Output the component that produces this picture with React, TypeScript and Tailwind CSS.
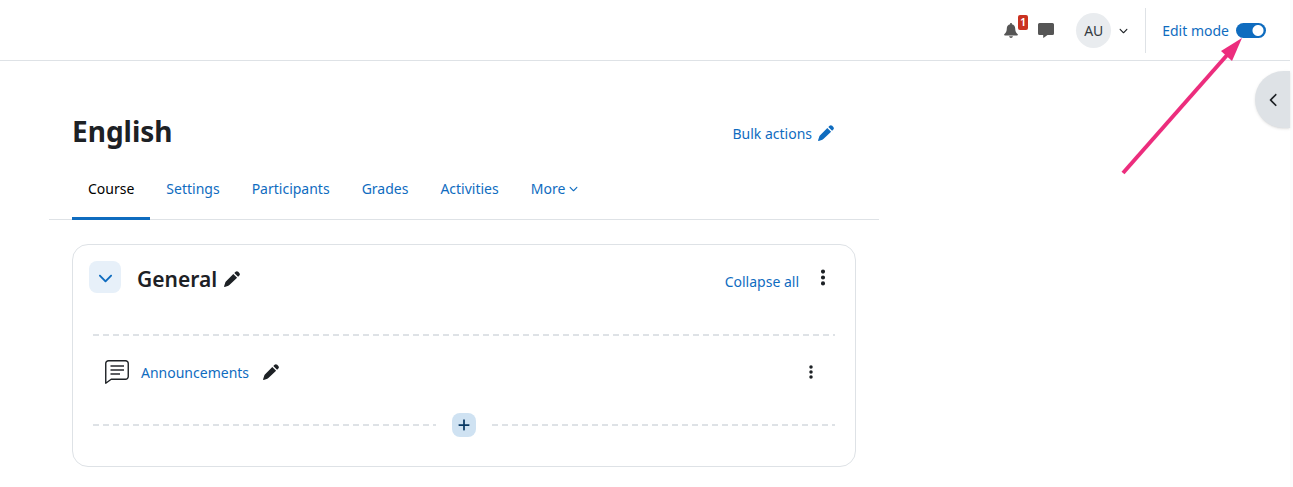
import type { ReactNode } from "react";
import { FaChevronDown, FaChevronLeft, FaEllipsisVertical, FaPlus } from "react-icons/fa6";

const tabs = ["Course", "Settings", "Participants", "Grades", "Activities"];

function Dashes() {
  return (
    <div className="h-[2px] flex-1 bg-[repeating-linear-gradient(to_right,#dee2e6_0_6px,transparent_6px_10px)]" />
  );
}

function IconButton({ label, className = "", children }: { label: string; className?: string; children: ReactNode }) {
  return (
    <button type="button" aria-label={label} className={`flex shrink-0 items-center justify-center ${className}`}>
      {children}
    </button>
  );
}

function PencilIcon() {
  return (
    <svg viewBox="0 0 16 16" className="size-4 shrink-0" fill="currentColor" aria-hidden="true">
      <path d="M9.300 2.900 13.100 6.700 5.400 14.100Q5 14.500 4.400 14.700L.7 15.900Q0 16 .1 15.300L1.300 11.500Q1.500 10.900 1.900 10.500Z" />
      <path d="M10.300 1.900 11.600.7Q12.900-.4 14.200.8L15.300 1.900Q16.500 3.200 15.300 4.500L14.100 5.700Z" />
    </svg>
  );
}

function BellIcon() {
  return (
    <svg viewBox="0 0 14 15" className="h-[15px] w-[14px]" fill="currentColor" aria-hidden="true">
      <path d="M6.200 0h1.600v1.200C10 1.600 11.200 3.300 11.200 5.500c0 2.800.8 4.200 2.300 5.400.8.700.4 1.600-.5 1.600H1c-.9 0-1.300-.9-.5-1.600C2 9.700 2.800 8.300 2.800 5.500c0-2.200 1.200-3.900 3.400-4.300Z" />
      <path d="M5 13.200h4Q8.500 15 7 15T5 13.200Z" />
    </svg>
  );
}

function MessageIcon() {
  return (
    <svg viewBox="0 0 16 15" className="h-[15px] w-4" fill="currentColor" aria-hidden="true">
      <path d="M1.500 0h13Q16 0 16 1.500v9q0 1.500-1.500 1.500H9.500L5.700 14.800Q5.200 15.100 5.200 14.500V12H1.500Q0 12 0 10.500v-9Q0 0 1.500 0Z" />
    </svg>
  );
}

function AnnouncementIcon() {
  return (
    <svg viewBox="0 0 24 24" className="size-6 shrink-0" fill="none" aria-hidden="true">
      <path
        d="M.75 23.200V3.500A2.750 2.750 0 0 1 3.500.75h17a2.750 2.750 0 0 1 2.750 2.750v13a2.750 2.750 0 0 1-2.750 2.750H6.200L.75 23.200Z"
        stroke="#1d2125"
        strokeWidth="1.4"
        strokeLinejoin="round"
      />
      <path d="M5.500 6h13.500M5.500 10h13.500M5.500 14h9.500" stroke="#5b5d61" strokeWidth="2" />
    </svg>
  );
}

function Header() {
  return (
    <header className="flex h-[61px] items-center justify-end border-b border-[#dee2e6] pr-6">
      <IconButton label="Notifications" className="relative mr-5 text-[#555]">
        <BellIcon />
        <span className="absolute -top-2 left-[14px] flex h-[15px] w-[10px] items-center justify-center rounded-[2px] bg-[#ca3120] text-[11px] font-semibold text-white">
          1
        </span>
      </IconButton>
      <IconButton label="Messages" className="mr-[22px] text-[#555]">
        <MessageIcon />
      </IconButton>
      <button type="button" aria-label="User menu" className="mr-[17px] flex items-center gap-2">
        <span className="flex size-[35px] items-center justify-center rounded-full bg-[#e9ecef] text-[#343a40]">
          AU
        </span>
        <FaChevronDown size={9} />
      </button>
      <div className="h-[45px] w-px bg-[#dee2e6]" />
      <label className="ml-4 flex items-center gap-[7px] text-[#0f6cbf]">
        Edit mode
        <input
          type="checkbox"
          role="switch"
          defaultChecked
          className="h-[15px] w-[30px] appearance-none rounded-full bg-[#0f6cbf] bg-[radial-gradient(circle_at_8px_center,#fff_5px,transparent_6px)] checked:bg-[radial-gradient(circle_at_22px_center,#fff_5px,transparent_6px)]"
        />
      </label>
    </header>
  );
}

function Section() {
  return (
    <section className="mx-[23px] mt-6 rounded-2xl border border-[#dee2e6] px-4 pt-4 pb-[29px]">
      <div className="flex h-8 items-center">
        <IconButton label="Collapse" className="size-8 rounded-lg bg-[#e7f0f9] text-[#0f6cbf]">
          <FaChevronDown size={15} />
        </IconButton>
        <div className="flex flex-1 items-center pt-1">
          <h2 className="ml-4 text-[21px] leading-8 font-semibold">General</h2>
          <IconButton label="Edit section name" className="ml-[7px]">
            <PencilIcon />
          </IconButton>
          <a href="#" className="mt-1 ml-auto text-[#0f6cbf]">
            Collapse all
          </a>
        </div>
        <IconButton label="Section actions" className="mr-2 ml-4 w-4">
          <FaEllipsisVertical size={19} />
        </IconButton>
      </div>

      <div className="mx-1 mt-[41px] flex">
        <Dashes />
      </div>

      <div className="mx-4 mt-6 mb-[29px] flex h-6 items-center">
        <AnnouncementIcon />
        <a href="#" className="ml-3 text-[#0f6cbf]">
          Announcements
        </a>
        <IconButton label="Edit title" className="ml-[14px]">
          <PencilIcon />
        </IconButton>
        <IconButton label="Activity actions" className="mr-1 ml-auto w-4">
          <FaEllipsisVertical size={16} />
        </IconButton>
      </div>

      <div className="mx-1 flex items-center gap-4">
        <Dashes />
        <IconButton label="Add content" className="size-6 rounded-lg bg-[#cfe2f2] text-[#083863]">
          <FaPlus size={14} />
        </IconButton>
        <Dashes />
      </div>
    </section>
  );
}

function App() {
  return (
    <div className="min-h-screen bg-[#fcfcfc] pr-[3px] font-['Noto_Sans',sans-serif] text-[14px] text-[#1d2125]">
      <div className="relative min-h-screen bg-white">
        <Header />

        {/* Block drawer toggle */}
        <button
          type="button"
          aria-label="Open block drawer"
          className="absolute top-[71px] right-0 flex h-[57px] w-[35px] items-center justify-center rounded-l-full bg-[#dee2e6] pl-[2px] shadow-sm"
        >
          <FaChevronLeft size={14} />
        </button>

        <main className="ml-[49px] max-w-[830px] pt-[49px]">
          <div className="flex items-center justify-between px-[23px]">
            <h1 className="text-[28px] leading-[42px] font-bold">English</h1>
            <button type="button" className="mt-1 mr-[22px] flex items-center gap-[6px] text-[#0f6cbf]">
              Bulk actions
              <PencilIcon />
            </button>
          </div>

          <nav className="mt-[6px] flex h-[62px] border-b border-[#dee2e6] px-[23px]">
            {tabs.map((tab, i) => (
              <a
                key={tab}
                href="#"
                className={
                  i === 0
                    ? "-mb-px flex items-center border-b-3 border-[#0f6cbf] px-4 pt-[2px] text-black"
                    : "-mb-px flex items-center border-b-3 border-transparent px-4 pt-[2px] text-[#0f6cbf]"
                }
              >
                {tab}
              </a>
            ))}
            <button
              type="button"
              className="-mb-px flex items-center gap-1 border-b-3 border-transparent px-4 pt-[2px] text-[#0f6cbf]"
            >
              More
              <FaChevronDown size={9} />
            </button>
          </nav>

          <Section />
        </main>

        {/* Pointer to the edit mode switch */}
        <svg
          viewBox="0 0 124 140"
          className="pointer-events-none absolute top-[36px] right-[46px] h-[140px] w-[124px]"
          aria-hidden="true"
        >
          <path d="M3 137 108 18" stroke="#ec2d7d" strokeWidth="4" />
          <path d="M122 2 101 15l11 10Z" fill="#ec2d7d" />
        </svg>
      </div>
    </div>
  );
}

export default App;
